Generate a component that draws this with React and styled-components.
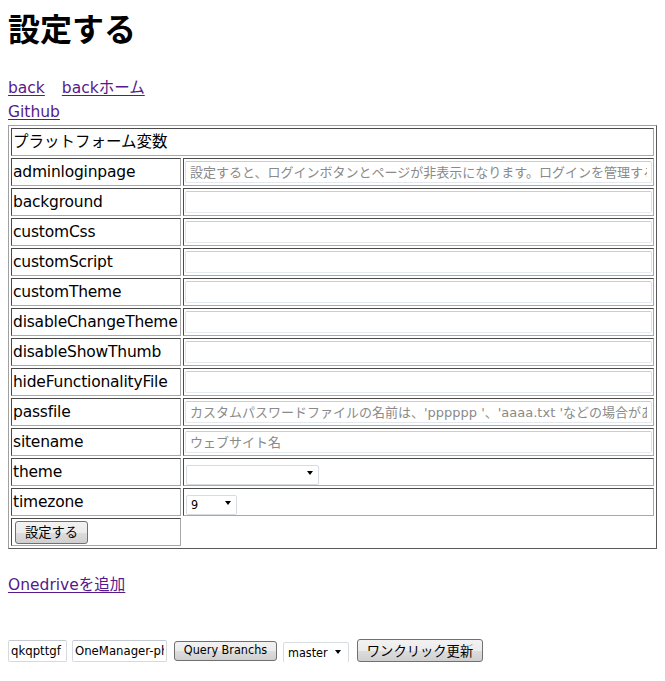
import React from "react";
import styled, { createGlobalStyle } from "styled-components";

const Global = createGlobalStyle`
  html, body { margin: 0; padding: 0; background: #fff; }
  body {
    margin: 8px;
    font-family: "DejaVu Sans", "Noto Sans CJK JP", sans-serif;
    font-size: 15.5px;
    line-height: 24px;
    color: #000;
  }
`;

const Title = styled.h1`
  margin: 0 0 30px;
  font-family: "Noto Sans CJK JP", sans-serif;
  font-size: 32px;
  font-weight: 700;
  line-height: 38px;
`;

const NavRow = styled.div`
  display: flex;
  gap: 17px;
  line-height: 24px;
`;

const LinkLine = styled.div`
  line-height: 24px;
`;

const Link = styled.a`
  color: #551a8b;
  text-decoration: underline;
  text-underline-offset: 2px;
  cursor: pointer;
`;

const Table = styled.table`
  width: 100%;
  margin-top: 1px;
  border-collapse: separate;
  border-spacing: 2px;
  border: 1px solid;
  border-color: #a0a0a0 #5a5a5a #5a5a5a #a0a0a0;
`;

const Cell = styled.td`
  border: 1px solid;
  border-color: #4a4a4a #a8a8a8 #a8a8a8 #4a4a4a;
  padding: 1px;
  height: 24px;
  line-height: 24px;
  vertical-align: middle;
  white-space: nowrap;
  width: ${(p) => (p.$label ? "166px" : "auto")};
  letter-spacing: ${(p) => (p.$label ? "-0.2px" : "normal")};
`;

const Field = styled.input`
  display: block;
  box-sizing: border-box;
  width: 100%;
  height: 22px;
  margin: 1px 0;
  padding: 0 4px;
  border: 1px solid;
  border-color: #c9ced6 #dde1e8 #e3e7ee #dde1e8;
  border-radius: 2px;
  background: #fff;
  font-family: "DejaVu Sans", "Noto Sans CJK JP", sans-serif;
  font-size: 13px;
  color: #000;
  outline: none;
  &::placeholder { color: #8a8a8a; }
`;

const SelectWrap = styled.span`
  position: relative;
  display: inline-block;
  vertical-align: middle;
  width: ${(p) => p.$w}px;
  height: ${(p) => p.$h}px;
  margin-left: ${(p) => p.$ml || 0}px;
  &::after {
    content: "";
    position: absolute;
    right: ${(p) => p.$ar || 6}px;
    top: 50%;
    margin-top: -1px;
    border-left: 3.5px solid transparent;
    border-right: 3.5px solid transparent;
    border-top: 4px solid #000;
    pointer-events: none;
  }
`;

const Select = styled.select`
  appearance: none;
  -webkit-appearance: none;
  box-sizing: border-box;
  width: 100%;
  height: 100%;
  padding: 0 0 0 4px;
  border: 1px solid #d7dbe2;
  border-radius: 2px;
  background: #fff;
  font-family: "DejaVu Sans Condensed", "DejaVu Sans", sans-serif;
  font-size: 12.5px;
  color: #000;
  outline: none;
`;

const InCellSelect = styled.div`
  display: flex;
  align-items: center;
  height: 24px;
`;

const WinButton = styled.button`
  box-sizing: border-box;
  display: inline-flex;
  align-items: center;
  justify-content: center;
  width: ${(p) => p.$w}px;
  height: ${(p) => p.$h}px;
  margin-left: ${(p) => p.$ml || 0}px;
  padding: 0;
  border: 1px solid #707070;
  border-radius: 3px;
  background: linear-gradient(#f2f2f2 0%, #ebebeb 50%, #dddddd 51%, #cfcfcf 100%);
  font-family: ${(p) =>
    p.$latin
      ? '"DejaVu Sans Condensed", "DejaVu Sans", sans-serif'
      : '"Noto Sans CJK JP", sans-serif'};
  font-size: ${(p) => (p.$latin ? "12.5px" : "13.3px")};
  color: #000;
  line-height: 1;
  letter-spacing: normal;
  vertical-align: middle;
`;

const CellButton = styled(WinButton)`
  margin: 0 0 0 2px;
  display: flex;
`;

const Section = styled.div`
  margin-top: 24px;
  line-height: 24px;
`;

const Toolbar = styled.div`
  display: flex;
  align-items: center;
  margin-top: 42px;
`;

const SmallInput = styled.input`
  box-sizing: border-box;
  width: ${(p) => p.$w}px;
  height: 22px;
  margin-left: ${(p) => p.$ml || 0}px;
  padding: 0 2px;
  border: 1px solid #d5d9e0;
  border-top-color: #c4c9d1;
  border-radius: 2px;
  background: #fff;
  font-family: "DejaVu Sans Condensed", "DejaVu Sans", sans-serif;
  font-size: 13px;
  color: #000;
  outline: none;
`;

const rows = [
  { name: "adminloginpage", ph: "設定すると、ログインボタンとページが非表示になります。ログインを管理するには、この値をURLの後に追加してください。" },
  { name: "background", ph: "" },
  { name: "customCss", ph: "" },
  { name: "customScript", ph: "" },
  { name: "customTheme", ph: "" },
  { name: "disableChangeTheme", ph: "" },
  { name: "disableShowThumb", ph: "" },
  { name: "hideFunctionalityFile", ph: "" },
  { name: "passfile", ph: "カスタムパスワードファイルの名前は、'pppppp '、'aaaa.txt 'などの場合があります。" },
  { name: "sitename", ph: "ウェブサイト名" },
];

export default function App() {
  return (
    <>
      <Global />
      <Title>設定する</Title>
      <NavRow>
        <Link>back</Link>
        <Link>backホーム</Link>
      </NavRow>
      <LinkLine>
        <Link>Github</Link>
      </LinkLine>
      <Table>
        <tbody>
          <tr>
            <Cell colSpan={2}>プラットフォーム変数</Cell>
          </tr>
          {rows.map((r) => (
            <tr key={r.name}>
              <Cell $label>{r.name}</Cell>
              <Cell>
                <Field placeholder={r.ph} />
              </Cell>
            </tr>
          ))}
          <tr>
            <Cell $label>theme</Cell>
            <Cell>
              <InCellSelect>
                <SelectWrap $w={133} $h={20} $ml={1}>
                  <Select defaultValue="">
                    <option value=""></option>
                    <option value="classic">classic</option>
                  </Select>
                </SelectWrap>
              </InCellSelect>
            </Cell>
          </tr>
          <tr>
            <Cell $label>timezone</Cell>
            <Cell>
              <InCellSelect>
                <SelectWrap $w={51} $h={20} $ml={1}>
                  <Select defaultValue="9">
                    <option value="9">9</option>
                    <option value="8">8</option>
                  </Select>
                </SelectWrap>
              </InCellSelect>
            </Cell>
          </tr>
          <tr>
            <Cell $label>
              <CellButton $w={73} $h={23}>設定する</CellButton>
            </Cell>
          </tr>
        </tbody>
      </Table>
      <Section>
        <Link>Onedriveを追加</Link>
      </Section>
      <Toolbar>
        <SmallInput $w={59} defaultValue="qkqpttgf" />
        <SmallInput $w={95} $ml={5} defaultValue="OneManager-php" />
        <WinButton $latin $w={103} $h={20} $ml={7}>Query Branchs</WinButton>
        <SelectWrap $w={66} $h={21} $ml={6} $ar={8}>
          <Select defaultValue="master">
            <option value="master">master</option>
          </Select>
        </SelectWrap>
        <WinButton $w={126} $h={23} $ml={8}>ワンクリック更新</WinButton>
      </Toolbar>
    </>
  );
}
